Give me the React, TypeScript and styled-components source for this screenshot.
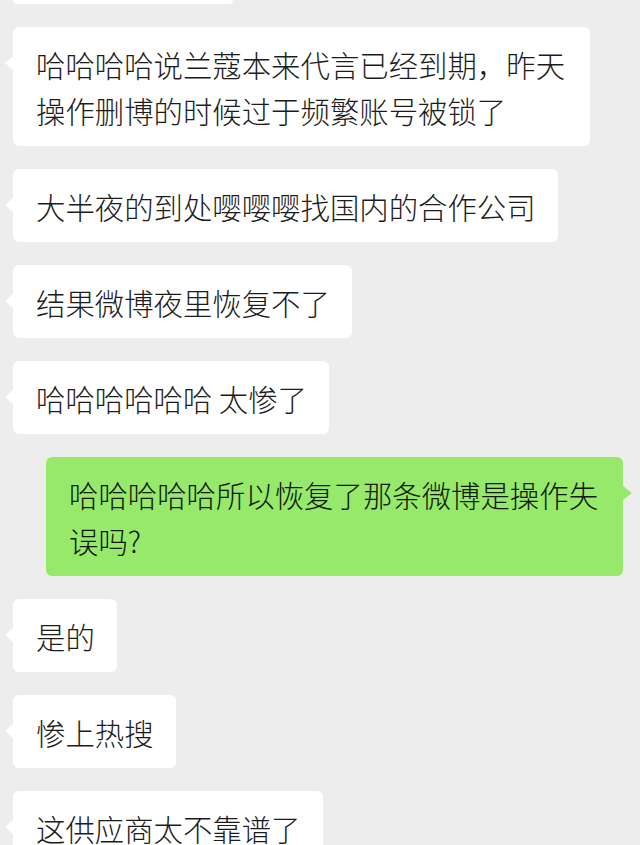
import React from "react";
import styled, { createGlobalStyle, css } from "styled-components";

const GlobalStyle = createGlobalStyle`
  html, body {
    margin: 0;
    padding: 0;
    background: #ededed;
    overflow: hidden;
  }
  body {
    font-family: "Noto Sans CJK SC", "Noto Sans", sans-serif;
  }
`;

const Screen = styled.div`
  width: 640px;
  height: 845px;
  overflow: hidden;
  background: #ededed;
`;

const MessageList = styled.div`
  display: flex;
  flex-direction: column;
  gap: 23px;
`;

const ClippedBubble = styled.div`
  align-self: flex-start;
  margin-left: 13px;
  width: 220px;
  height: 4px;
  background: #ffffff;
  border-radius: 0 0 6px 6px;
`;

type Side = "left" | "right";

const Bubble = styled.div<{ $side: Side }>`
  position: relative;
  box-sizing: border-box;
  max-width: 577px;
  padding: 13.5px 22px 13.5px 23px;
  border-radius: 6px;
  font-size: 29.4px;
  font-weight: 300;
  line-height: 46px;
  color: #1c1c1c;
  word-break: break-all;

  &::before {
    content: "";
    position: absolute;
    top: 29px;
    width: 0;
    height: 0;
    border-top: 7px solid transparent;
    border-bottom: 7px solid transparent;
  }

  ${({ $side }) =>
    $side === "left"
      ? css`
          align-self: flex-start;
          margin-left: 13px;
          background: #ffffff;
          &::before {
            left: -8px;
            border-right: 8px solid #ffffff;
          }
        `
      : css`
          align-self: flex-end;
          margin-right: 17px;
          background: #96e96a;
          color: #10180c;
          &::before {
            right: -9px;
            border-left: 9px solid #96e96a;
          }
        `}
`;

const messages: { side: Side; text: string }[] = [
  { side: "left", text: "哈哈哈哈说兰蔻本来代言已经到期，昨天操作删博的时候过于频繁账号被锁了" },
  { side: "left", text: "大半夜的到处嘤嘤嘤找国内的合作公司" },
  { side: "left", text: "结果微博夜里恢复不了" },
  { side: "left", text: "哈哈哈哈哈哈 太惨了" },
  { side: "right", text: "哈哈哈哈哈所以恢复了那条微博是操作失误吗?" },
  { side: "left", text: "是的" },
  { side: "left", text: "惨上热搜" },
  { side: "left", text: "这供应商太不靠谱了" },
];

export default function App() {
  return (
    <>
      <GlobalStyle />
      <Screen>
        <MessageList>
          <ClippedBubble />
          {messages.map((m, i) => (
            <Bubble key={i} $side={m.side}>
              {m.text}
            </Bubble>
          ))}
        </MessageList>
      </Screen>
    </>
  );
}
